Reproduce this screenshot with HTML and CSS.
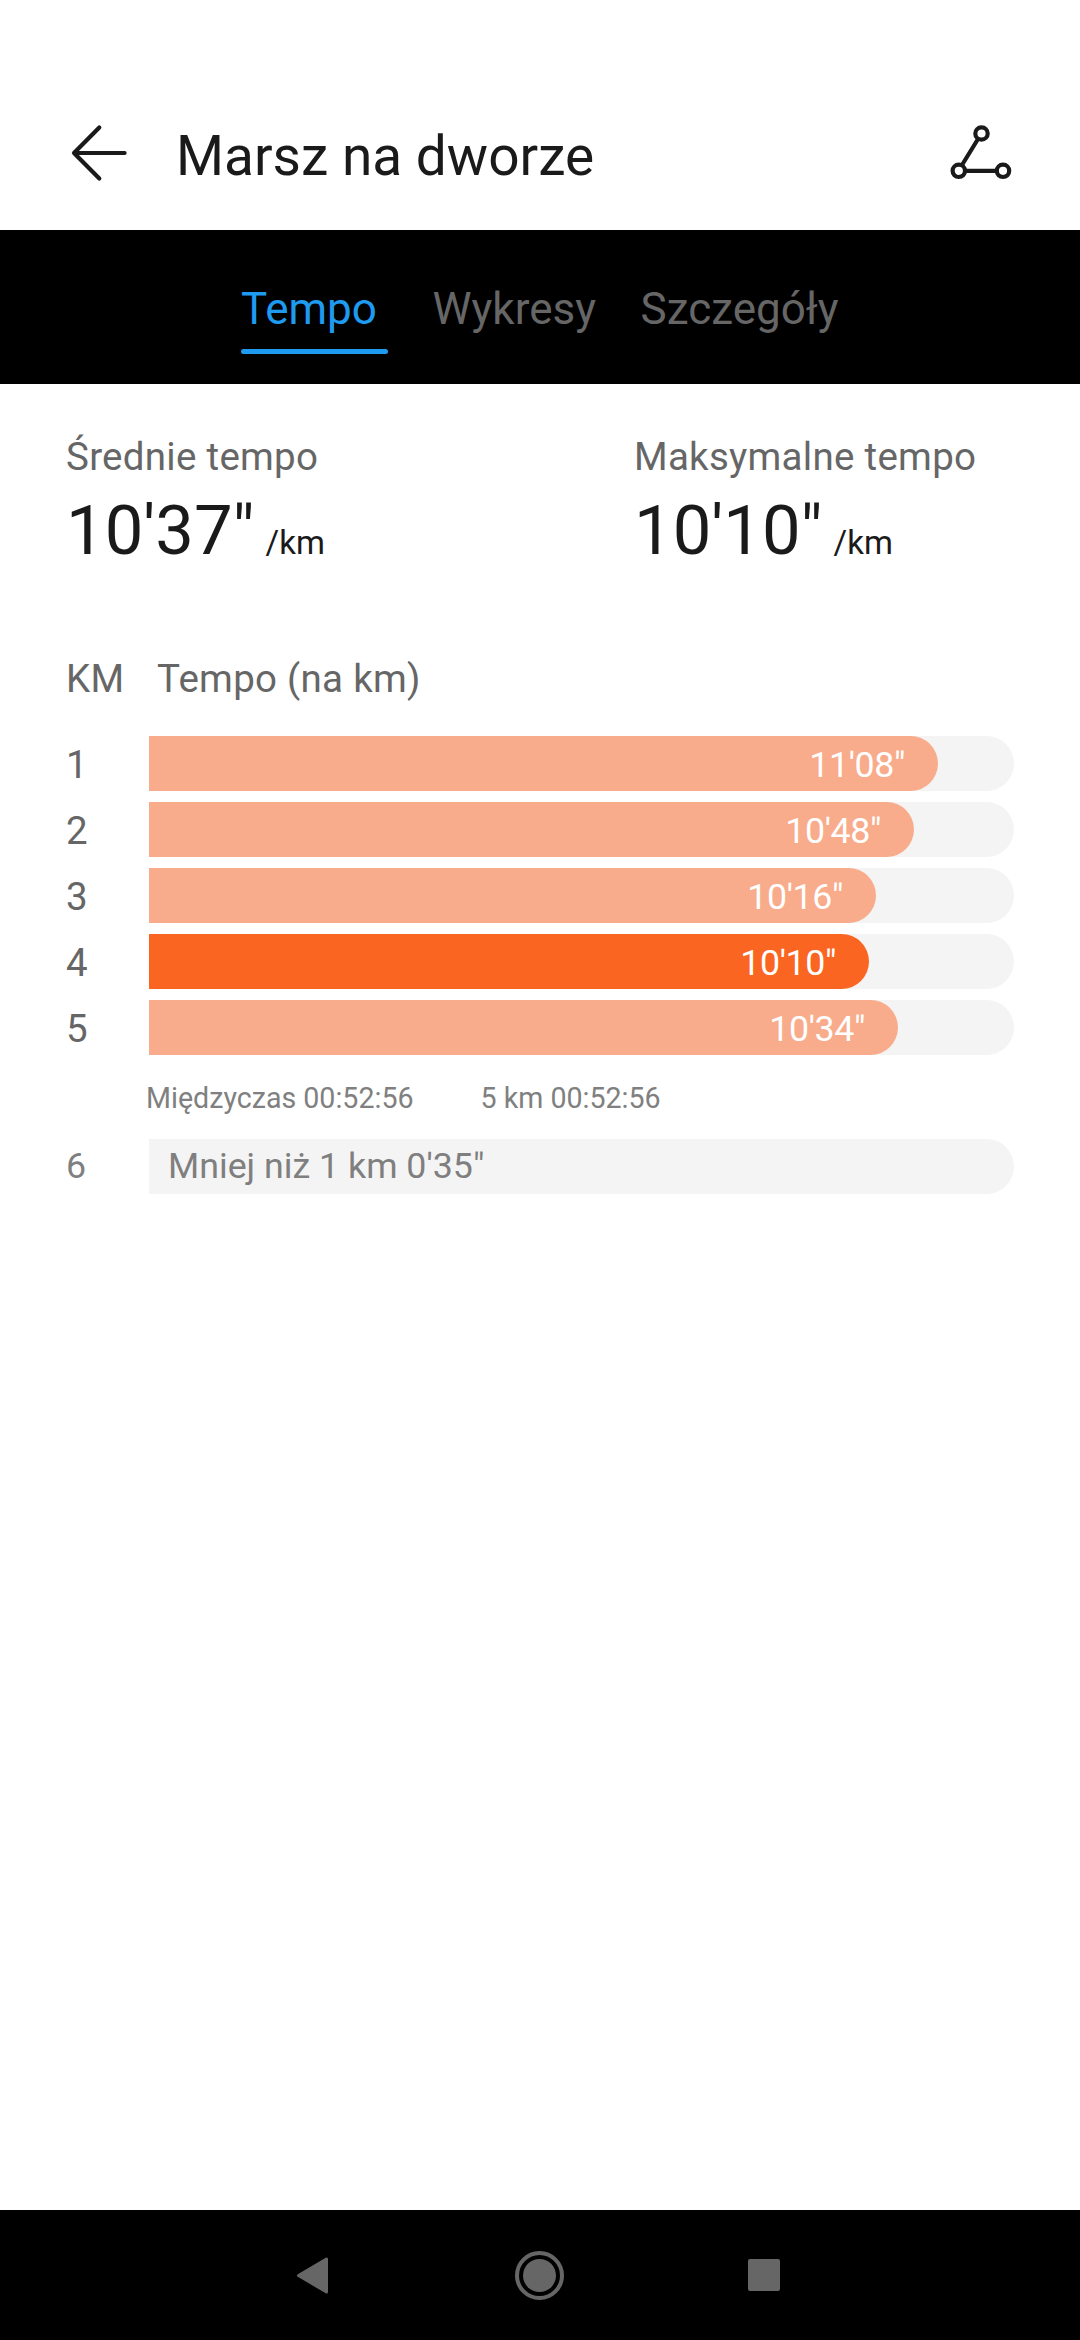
FILE: index.html
```html
<!DOCTYPE html>
<html lang="pl">

<head>
    <meta charset="UTF-8">
    <meta name="viewport" content="width=device-width, initial-scale=1.0">
    <title>Marsz na dworze</title>
    <link rel="stylesheet" href="styles.css">
</head>

<body>
    <header class="header">
        <svg class="back" width="60" height="60" viewBox="0 0 60 60">
            <path d="M55.6 30H5M30.3 4.5L5 30L30.3 55.5" />
        </svg>
        <h1>Marsz na dworze</h1>
        <svg class="share" width="64" height="60" viewBox="0 0 64 60">
            <path d="M30 16L14 42M17 47.8H49" />
            <circle cx="33.5" cy="10.5" r="6.2" />
            <circle cx="10.8" cy="47.8" r="6.2" />
            <circle cx="55" cy="47.8" r="6.2" />
        </svg>
    </header>

    <nav class="tabs">
        <div class="tab active">Tempo</div>
        <div class="tab">Wykresy</div>
        <div class="tab">Szczegóły</div>
    </nav>

    <main class="content">
        <div class="stats">
            <div class="stat">
                <p class="label">Średnie tempo</p>
                <div class="value">
                    <span>10'37"</span>
                    <span class="unit">/km</span>
                </div>
            </div>
            <div class="stat">
                <p class="label">Maksymalne tempo</p>
                <div class="value">
                    <span>10'10"</span>
                    <span class="unit">/km</span>
                </div>
            </div>
        </div>

        <div class="listHead">
            <span class="km">KM</span>
            <span>Tempo (na km)</span>
        </div>

        <div class="list">
            <div class="row">
                <span class="num">1</span>
                <div class="track"><div class="bar" style="width: 789px">11'08"</div></div>
            </div>
            <div class="row">
                <span class="num">2</span>
                <div class="track"><div class="bar" style="width: 765px">10'48"</div></div>
            </div>
            <div class="row">
                <span class="num">3</span>
                <div class="track"><div class="bar" style="width: 727px">10'16"</div></div>
            </div>
            <div class="row">
                <span class="num">4</span>
                <div class="track"><div class="bar best" style="width: 720px">10'10"</div></div>
            </div>
            <div class="row">
                <span class="num">5</span>
                <div class="track"><div class="bar" style="width: 749px">10'34"</div></div>
            </div>
            <div class="split">
                <span>Międzyczas 00:52:56</span>
                <span>5 km 00:52:56</span>
            </div>
            <div class="row last">
                <span class="num">6</span>
                <div class="track">Mniej niż 1 km 0'35"</div>
            </div>
        </div>
    </main>

    <footer class="navbar">
        <svg width="60" height="60" viewBox="0 0 60 60">
            <path d="M13.5 30.5L41.5 14V47Z" stroke="#666" stroke-width="3" stroke-linejoin="round" />
        </svg>
        <svg width="60" height="60" viewBox="0 0 60 60">
            <circle cx="29.5" cy="30.5" r="22.5" fill="none" stroke="#666" stroke-width="4" />
            <circle cx="29.5" cy="30.5" r="16.5" />
        </svg>
        <svg width="60" height="60" viewBox="0 0 60 60">
            <rect x="13" y="14" width="32" height="32" rx="2" />
        </svg>
    </footer>
</body>

</html>
```

FILE: styles.css
```css
* {
    margin: 0;
    padding: 0;
    box-sizing: border-box;
    font-family: Roboto, sans-serif;
}

body {
    display: flex;
    flex-direction: column;
    width: 1080px;
    height: 2340px;
    background: #fff;
    color: #1a1a1a;
}

.header {
    display: flex;
    align-items: center;
    height: 230px;
    padding: 76px 68px 0 69px;
}

.header svg {
    fill: none;
    stroke: #1a1a1a;
    stroke-width: 4.2;
    stroke-linecap: round;
    stroke-linejoin: round;
}

.header h1 {
    flex: 1;
    padding: 6px 0 0 47px;
    font-size: 55px;
    font-weight: 400;
    line-height: 64px;
}

.tabs {
    display: flex;
    gap: 44.5px;
    height: 154px;
    padding: 53px 0 0 241px;
    background: #000;
}

.tab {
    color: #666;
    font-size: 44px;
    line-height: 52px;
}

.tab.active {
    width: 147px;
    color: #1e9bf0;
}

.tab.active::after {
    content: '';
    display: block;
    height: 5px;
    margin-top: 14px;
    border-radius: 3px;
    background: #1e9bf0;
}

.content {
    flex: 1;
    padding: 50px 66px 0;
}

.stats {
    display: grid;
    grid-template-columns: 568px 1fr;
}

.label,
.listHead {
    color: #666;
    font-size: 38.5px;
    line-height: 46px;
    letter-spacing: 0.28px;
}

.value {
    display: flex;
    align-items: baseline;
    gap: 11px;
    height: 82px;
    margin-top: 9px;
    font-size: 68.75px;
    line-height: 84px;
}

.unit {
    font-size: 33px;
    line-height: 40px;
}

.listHead {
    display: flex;
    margin-top: 85px;
}

.km {
    width: 91px;
}

.list {
    display: flex;
    flex-direction: column;
    gap: 11px;
    margin-top: 34px;
}

.row {
    display: flex;
    height: 55px;
}

.num {
    width: 83px;
    color: #666;
    font-size: 38.5px;
    line-height: 58px;
}

.track {
    width: 865px;
    border-radius: 0 28px 28px 0;
    background: #f4f4f4;
}

.bar {
    height: 55px;
    padding-right: 33px;
    border-radius: 0 28px 28px 0;
    background: #f8ac8b;
    color: #fff;
    font-size: 35.75px;
    line-height: 58px;
    letter-spacing: -0.4px;
    text-align: right;
}

.bar.best {
    background: #fb6522;
}

.split {
    display: flex;
    gap: 67px;
    margin: 14px 0 12px 80px;
    color: #808080;
    font-size: 28.6px;
    line-height: 36px;
}

.last .num,
.last .track {
    color: #7f7f7f;
    font-size: 35.75px;
    line-height: 54px;
}

.last .track {
    padding-left: 19px;
}

.navbar {
    display: flex;
    align-items: center;
    justify-content: center;
    gap: 165px;
    height: 130px;
    background: #000;
}

.navbar svg {
    fill: #666;
}
```
